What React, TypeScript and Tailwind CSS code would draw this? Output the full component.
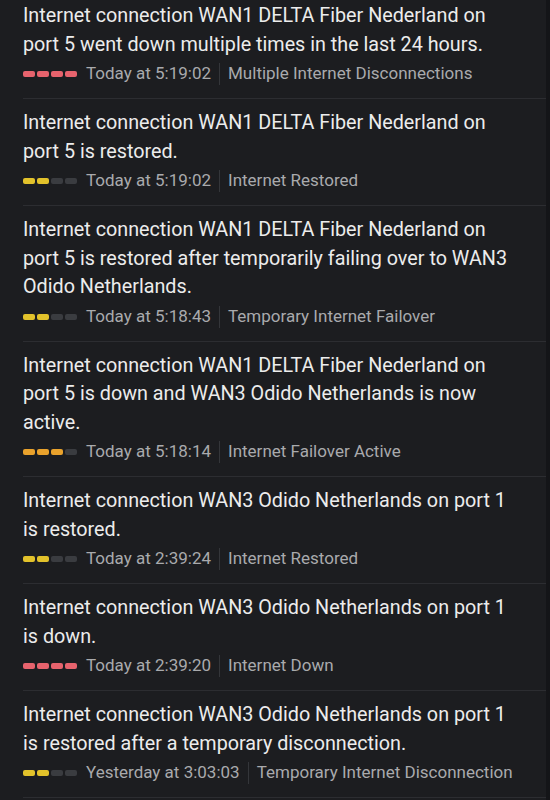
import React from "react";

type Item = {
  text: string;
  time: string;
  label: string;
  level: "red" | "yellow" | "orange";
  first?: boolean;
};

const items: Item[] = [
  {
    text: "Internet connection WAN1 DELTA Fiber Nederland on port 5 went down multiple times in the last 24 hours.",
    time: "Today at 5:19:02",
    label: "Multiple Internet Disconnections",
    level: "red",
    first: true,
  },
  {
    text: "Internet connection WAN1 DELTA Fiber Nederland on port 5 is restored.",
    time: "Today at 5:19:02",
    label: "Internet Restored",
    level: "yellow",
  },
  {
    text: "Internet connection WAN1 DELTA Fiber Nederland on port 5 is restored after temporarily failing over to WAN3 Odido Netherlands.",
    time: "Today at 5:18:43",
    label: "Temporary Internet Failover",
    level: "yellow",
  },
  {
    text: "Internet connection WAN1 DELTA Fiber Nederland on port 5 is down and WAN3 Odido Netherlands is now active.",
    time: "Today at 5:18:14",
    label: "Internet Failover Active",
    level: "orange",
  },
  {
    text: "Internet connection WAN3 Odido Netherlands on port 1 is restored.",
    time: "Today at 2:39:24",
    label: "Internet Restored",
    level: "yellow",
  },
  {
    text: "Internet connection WAN3 Odido Netherlands on port 1 is down.",
    time: "Today at 2:39:20",
    label: "Internet Down",
    level: "red",
  },
  {
    text: "Internet connection WAN3 Odido Netherlands on port 1 is restored after a temporary disconnection.",
    time: "Yesterday at 3:03:03",
    label: "Temporary Internet Disconnection",
    level: "yellow",
  },
];

function Bars({ level }: { level: Item["level"] }) {
  const on = level === "red" ? 4 : level === "orange" ? 3 : 2;
  const color =
    level === "red" ? "bg-[#e7636d]" : level === "orange" ? "bg-[#e9a22c]" : "bg-[#e2c22b]";
  return (
    <div className="flex items-center gap-[2px]">
      {[0, 1, 2, 3].map((i) => (
        <div
          key={i}
          className={`h-[6px] w-[12px] rounded-[2px] ${i < on ? color : "bg-[#3a3c40]"}`}
        />
      ))}
    </div>
  );
}

export default function App() {
  return (
    <div
      className="flex h-[800px] w-[550px] overflow-hidden bg-[#1c1d20]"
      style={{ fontFamily: "Roboto, 'Noto Sans', sans-serif" }}
    >
      <div className="flex w-[546px] flex-col pl-[23px]">
        {items.map((it, idx) => (
          <div
            key={idx}
            className={`border-b border-[#2c2d31] pb-[12px] ${it.first ? "pt-[2px]" : "pt-[10px]"}`}
          >
            <p className="w-[494px] text-[19.75px] leading-[28.5px] text-[#ececec]">{it.text}</p>
            <div className="mt-[3px] flex h-[24px] items-center text-[17px] text-[#a9aaad]">
              <Bars level={it.level} />
              <span className="ml-[9px]">{it.time}</span>
              <span className="mx-[8px] h-[22px] w-px bg-[#34363a]" />
              <span>{it.label}</span>
            </div>
          </div>
        ))}
      </div>
      <div className="w-[4px] bg-[#141518]" />
    </div>
  );
}
